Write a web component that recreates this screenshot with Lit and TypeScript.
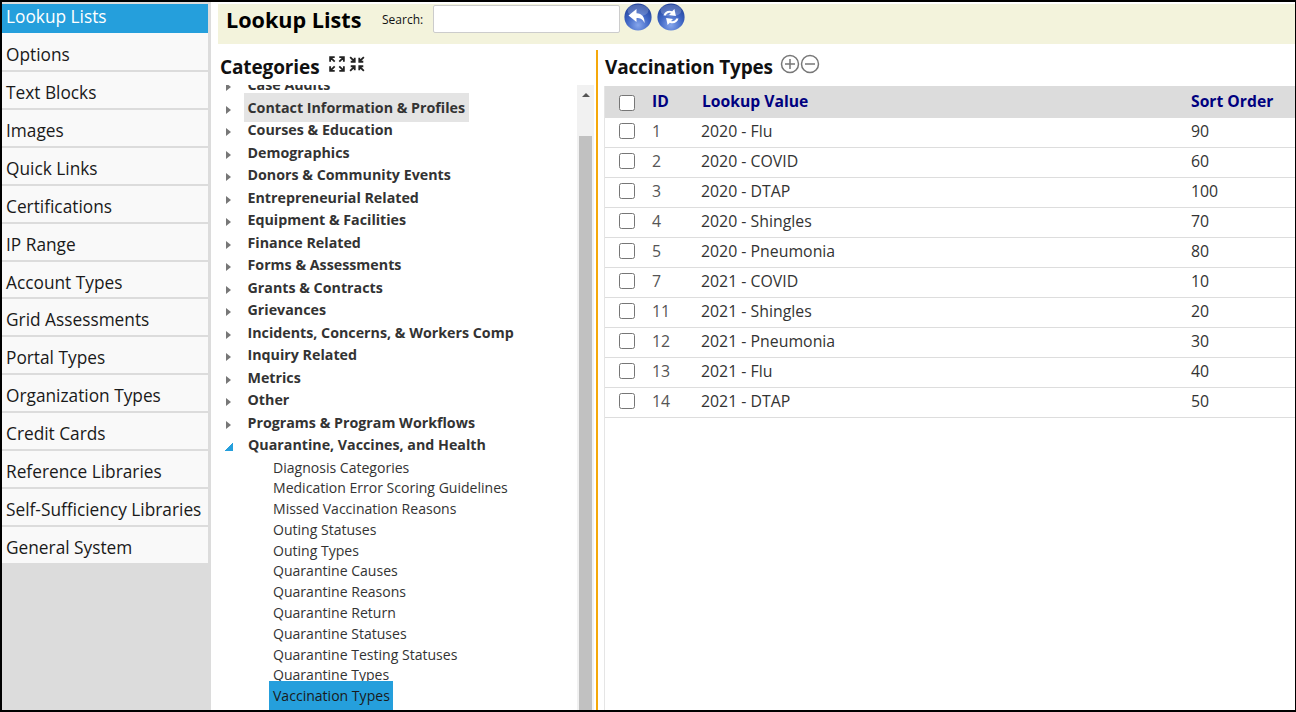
import { LitElement, html, css, svg } from "lit";
import { customElement } from "lit/decorators.js";

const NAV = ["Lookup Lists","Options","Text Blocks","Images","Quick Links","Certifications","IP Range","Account Types","Grid Assessments","Portal Types","Organization Types","Credit Cards","Reference Libraries","Self-Sufficiency Libraries","General System"];
const CATS = ["Case Audits","Contact Information & Profiles","Courses & Education","Demographics","Donors & Community Events","Entrepreneurial Related","Equipment & Facilities","Finance Related","Forms & Assessments","Grants & Contracts","Grievances","Incidents, Concerns, & Workers Comp","Inquiry Related","Metrics","Other","Programs & Program Workflows"];
const KIDS = ["Diagnosis Categories","Medication Error Scoring Guidelines","Missed Vaccination Reasons","Outing Statuses","Outing Types","Quarantine Causes","Quarantine Reasons","Quarantine Return","Quarantine Statuses","Quarantine Testing Statuses","Quarantine Types","Vaccination Types"];
const ROWS: [number,string,number][] = [[1,"2020 - Flu",90],[2,"2020 - COVID",60],[3,"2020 - DTAP",100],[4,"2020 - Shingles",70],[5,"2020 - Pneumonia",80],[7,"2021 - COVID",10],[11,"2021 - Shingles",20],[12,"2021 - Pneumonia",30],[13,"2021 - Flu",40],[14,"2021 - DTAP",50]];

const orb = (inner: unknown, id: string) => html`<svg class="orb" viewBox="0 0 28 28" width="28" height="28">
  <defs><radialGradient id=${id} cx="50%" cy="80%" r="75%"><stop offset="0" stop-color="#86a6ec"/><stop offset=".55" stop-color="#3f66c4"/><stop offset="1" stop-color="#22439c"/></radialGradient></defs>
  <circle cx="14" cy="14" r="13.6" fill="url(#${id})"/>
  <ellipse cx="14" cy="7.500" rx="10.500" ry="6" fill="#fff" opacity=".2"/>
  ${inner}</svg>`;
const back = svg`<path d="M12.500 6 4.500 12.500l8 6.500v-4c3.600 0 6.300 1.200 8 5 .4-5.600-2.600-9.600-8-9.800z" fill="#fff"/>`;
const refresh = svg`<path d="M6.500 12.500c.9-3.800 5-5.900 8.700-4.200l2.200-2.200 1.500 6.900-6.900-1.100 1.900-1.900c-2-.8-4.300.3-5 2.500zM21.500 15.500c-.9 3.800-5 5.900-8.700 4.200l-2.200 2.200-1.500-6.900 6.900 1.100-1.900 1.900c2 .8 4.300-.3 5-2.500z" fill="#fff"/>`;

@customElement("app-root")
export class AppRoot extends LitElement {
  static styles = css`
    :host { display: block; width: 1296px; height: 712px; overflow: hidden; font-family: "Open Sans", "Noto Sans", sans-serif; color: #111; }
    * { box-sizing: border-box; }
    .frame { height: 712px; border: solid #000; border-width: 2px 1px 2px 2px; background: #fff; padding-top: 2px; display: flex; }
    .nav { width: 209px; background: #dcdcdc; padding-right: 3px; flex: none; margin-top: -2px; padding-top: 2px; }
    .nav-item { height: 37.920px; background: #f9f9f9; border-bottom: 2px solid #dcdcdc; padding: 7px 0 0 4px; font-size: 17.300px; line-height: 27px; color: #1a1a1a; white-space: nowrap; }
    .nav-item:first-child { height: 29px; background: #259fdc; color: #fff; line-height: 26px; padding-top: 0; border: 0; }
    .nav-item:nth-child(2) { height: 39px; padding-top: 8px; }
    .main { flex: 1; min-width: 0; padding-left: 7px; display: flex; flex-direction: column; }
    .head { height: 40px; background: #f3f3dc; display: flex; align-items: flex-start; padding-left: 8px; flex: none; }
    .title { font-size: 21.600px; font-weight: 700; color: #000; line-height: 32px; width: 156px; }
    .slabel { font-size: 12px; line-height: 31px; width: 51px; }
    .search { width: 187px; height: 28px; margin-top: 1px; background: #fff; border: 1px solid #ccc; border-radius: 2px; }
    .orb { display: block; margin-left: 4px; margin-top: -1px; }
    .orb + .orb { margin-left: 5px; }
    .body { flex: 1; display: flex; min-height: 0; padding-top: 6px; }
    .left { width: 378px; flex: none; display: flex; flex-direction: column; min-height: 0; }
    .h2 { font-size: 19px; font-weight: 700; color: #111; display: flex; align-items: center; height: 35px; padding-bottom: 2px; flex: none; letter-spacing: -.18px; }
    .left .h2 { padding-left: 2px; letter-spacing: -.12px; }
    .h2 svg { display: block; flex: none; }
    .tools { margin-left: 10px; margin-top: -6px; display: flex; gap: 4px; }
    .tree-wrap { flex: 1; display: flex; min-height: 0; }
    .tree { flex: 1; overflow: hidden; min-width: 0; }
    .tree-in { margin-top: -11px; }
    .cat { height: 22.500px; display: flex; align-items: center; font-size: 14.250px; font-weight: 700; color: #333; white-space: nowrap; padding-left: 8px; }
    .cat .arr { width: 0; height: 0; border-left: 5.500px solid #777; border-top: 4px solid transparent; border-bottom: 4px solid transparent; margin-right: 16.500px; margin-top: 4px; flex: none; }
    .cat.open .arr { border: 0; width: 8px; height: 8px; background: linear-gradient(135deg, transparent 50%, #259fdc 50%); margin-left: -1px; margin-right: 15px; margin-top: 3px; }
    .cat span { line-height: 22px; }
    .cat.hi { position: relative; }
    .cat.hi span { background: #e4e4e4; padding: 0 4px; margin-left: -4px; line-height: 29px; height: 29px; }
    .kids { padding-left: 51px; padding-top: 1px; }
    .kid { height: 20.800px; line-height: 20px; font-size: 14.050px; color: #333; white-space: nowrap; }
    .kid span { display: inline-block; padding: 0 4px; }
    .kid.sel { height: 30px; }
    .kid.sel span { background: #259fdc; color: #1a1a1a; width: 124px; height: 31px; line-height: 29px; margin-top: -5px; position: relative; }
    .scroll { width: 17px; background: #f1f1f1; flex: none; margin-right: 2px; padding: 0 2px; display: flex; flex-direction: column; }
    .up { height: 51px; flex: none; display: flex; justify-content: center; padding-top: 8px; }
    .up i { width: 0; height: 0; border: 4px solid transparent; border-top: 0; border-bottom: 4px solid #555; display: block; }
    .thumb { flex: 1; background: #c1c1c1; }
    .right { flex: 1; min-width: 0; border-left: 2px solid #f5a80a; display: flex; flex-direction: column; padding-left: 6px; }
    .right .h2 { padding-left: 1px; height: 36px; padding-bottom: 3px; }
    .pm { margin-left: 7px; margin-top: -6px; display: flex; gap: 0; }
    .tbl { flex: 1; border-left: 1px solid #e5e5e5; min-height: 0; }
    .row { display: grid; grid-template-columns: 47px 49px 490px 1fr; height: 30px; padding-bottom: 3px; align-items: center; border-bottom: 1px solid #ddd; font-size: 15.850px; color: #333; }
    .row.th { height: 32px; padding-bottom: 0; background: #dcdcdc; color: #00007f; font-weight: 700; font-size: 15.700px; border: 0; }
    .row.th span { margin-bottom: 2px; }
    .row.th .cb { margin-top: 2px; }
    .row.th span:nth-child(3) { padding-left: 1px; }
    .cb { width: 16px; height: 16px; margin-left: 14px; background: #fff; border: 1px solid #767676; border-radius: 2.500px; }
    .id { color: #555; }
  `;
  render() {
    return html`<div class="frame">
      <nav class="nav">${NAV.map(n => html`<div class="nav-item">${n}</div>`)}</nav>
      <div class="main">
        <header class="head">
          <div class="title">Lookup Lists</div>
          <div class="slabel">Search:</div>
          <div class="search"></div>
          ${orb(back, "g1")}${orb(refresh, "g2")}
        </header>
        <div class="body">
          <section class="left">
            <div class="h2">Categories
              <span class="tools">
                <svg width="16" height="16" viewBox="1 1 14 14" fill="none" stroke="#222" stroke-width="1.600"><path d="M2 6V2h4M2 2l4 4M10 2h4v4M14 2l-4 4M2 10v4h4M2 14l4-4M14 10v4h-4M14 14l-4-4"/></svg>
                <svg width="16" height="16" viewBox="1 1 14 14" fill="none" stroke="#222" stroke-width="1.600"><path d="M2 2l4 4M6 2.500V6H2.500M14 2l-4 4M10 2.500V6h3.500M2 14l4-4M6 13.500V10H2.500M14 14l-4-4M10 13.500V10h3.500"/></svg>
              </span>
            </div>
            <div class="tree-wrap">
              <div class="tree"><div class="tree-in">
                ${CATS.map((c,i) => html`<div class="cat ${i===1?'hi':''}"><i class="arr"></i><span>${c}</span></div>`)}
                <div class="cat open"><i class="arr"></i><span>Quarantine, Vaccines, and Health</span></div>
                <div class="kids">${KIDS.map((k,i) => html`<div class="kid ${i===11?'sel':''}"><span>${k}</span></div>`)}</div>
              </div></div>
              <div class="scroll"><div class="up"><i></i></div><div class="thumb"></div></div>
            </div>
          </section>
          <section class="right">
            <div class="h2">Vaccination Types
              <span class="pm">
                <svg width="20" height="20" viewBox="0 0 20 20" fill="none" stroke="#777" stroke-width="1.500"><circle cx="10" cy="10" r="8.500"/><path d="M10 5v10M5 10h10"/></svg>
                <svg width="20" height="20" viewBox="0 0 20 20" fill="none" stroke="#777" stroke-width="1.500"><circle cx="10" cy="10" r="8.500"/><path d="M5 10h10"/></svg>
              </span>
            </div>
            <div class="tbl">
              <div class="row th"><div class="cb"></div><span>ID</span><span>Lookup Value</span><span>Sort Order</span></div>
              ${ROWS.map(r => html`<div class="row"><div class="cb"></div><span class="id">${r[0]}</span><span>${r[1]}</span><span>${r[2]}</span></div>`)}
            </div>
          </section>
        </div>
      </div>
    </div>`;
  }
}
